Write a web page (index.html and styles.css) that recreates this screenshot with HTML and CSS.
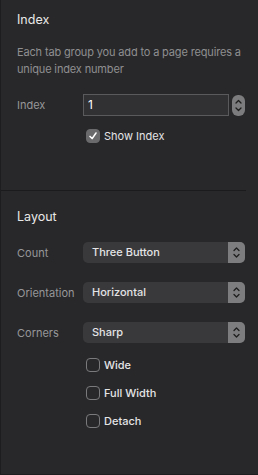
FILE: index.html
```html
<!DOCTYPE html>
<html lang="en">
<head>
  <meta charset="UTF-8">
  <title>Tab Group Inspector</title>
  <link rel="stylesheet" href="styles.css">
</head>
<body>
  <div class="panel">
    <section class="section index-section">
      <h2>Index</h2>
      <p class="hint">Each tab group you add to a page requires a unique index number</p>

      <div class="row first">
        <span class="label">Index</span>
        <div class="field">1</div>
        <div class="stepper">
          <svg width="13" height="21" viewBox="0 0 13 21">
            <path d="M4 8 L6.5 5.5 L9 8" fill="none" stroke="#1e1e1e" stroke-width="1.3" stroke-linecap="round" stroke-linejoin="round"/>
            <path d="M4 13 L6.5 15.5 L9 13" fill="none" stroke="#1e1e1e" stroke-width="1.3" stroke-linecap="round" stroke-linejoin="round"/>
          </svg>
        </div>
      </div>

      <label class="check checked">
        <span class="box">
          <svg width="14" height="14" viewBox="0 0 14 14">
            <path d="M3.5 7.5 L6 10 L10.5 3.5" fill="none" stroke="#fff" stroke-width="1.8" stroke-linecap="round" stroke-linejoin="round"/>
          </svg>
        </span>
        Show Index
      </label>
    </section>

    <div class="divider"></div>

    <section class="section layout-section">
      <h2>Layout</h2>

      <div class="row first">
        <span class="label">Count</span>
        <div class="select">
          <span class="value">Three Button</span>
          <span class="arrows">
            <svg width="17" height="21" viewBox="0 0 17 21">
              <path d="M6 8.5 L8.5 6 L11 8.5" fill="none" stroke="#1e1e1e" stroke-width="1.3" stroke-linecap="round" stroke-linejoin="round"/>
              <path d="M6 12.5 L8.5 15 L11 12.5" fill="none" stroke="#1e1e1e" stroke-width="1.3" stroke-linecap="round" stroke-linejoin="round"/>
            </svg>
          </span>
        </div>
      </div>

      <div class="row">
        <span class="label">Orientation</span>
        <div class="select">
          <span class="value">Horizontal</span>
          <span class="arrows">
            <svg width="17" height="21" viewBox="0 0 17 21">
              <path d="M6 8.5 L8.5 6 L11 8.5" fill="none" stroke="#1e1e1e" stroke-width="1.3" stroke-linecap="round" stroke-linejoin="round"/>
              <path d="M6 12.5 L8.5 15 L11 12.5" fill="none" stroke="#1e1e1e" stroke-width="1.3" stroke-linecap="round" stroke-linejoin="round"/>
            </svg>
          </span>
        </div>
      </div>

      <div class="row">
        <span class="label">Corners</span>
        <div class="select">
          <span class="value">Sharp</span>
          <span class="arrows">
            <svg width="17" height="21" viewBox="0 0 17 21">
              <path d="M6 8.5 L8.5 6 L11 8.5" fill="none" stroke="#1e1e1e" stroke-width="1.3" stroke-linecap="round" stroke-linejoin="round"/>
              <path d="M6 12.5 L8.5 15 L11 12.5" fill="none" stroke="#1e1e1e" stroke-width="1.3" stroke-linecap="round" stroke-linejoin="round"/>
            </svg>
          </span>
        </div>
      </div>

      <div class="checks">
        <label class="check"><span class="box"></span>Wide</label>
        <label class="check"><span class="box"></span>Full Width</label>
        <label class="check"><span class="box"></span>Detach</label>
      </div>
    </section>
  </div>
</body>
</html>
```

FILE: styles.css
```css
/* Inspector panel */
* {
  margin: 0;
  padding: 0;
  box-sizing: border-box;
}

body {
  background: #28282a;
  font-family: 'Inter', 'Noto Sans', sans-serif;
  font-size: 11px;
  color: #e6e6e6;
}

.panel {
  width: 258px;
  height: 475px;
  background: #28282a;
  border-left: 1px solid #1d1d1f;
  border-bottom: 1px solid #1d1d1f;
}

.section {
  padding: 0 10px 0 16px;
}

.index-section {
  padding-top: 12px;
  height: 190px;
}

.layout-section {
  padding-top: 18px;
}

h2 {
  font-size: 12.5px;
  font-weight: 400;
  line-height: 16px;
  color: #e8e8e8;
}

.hint {
  margin-top: 16px;
  font-size: 11px;
  line-height: 17px;
  color: #8f8f91;
  letter-spacing: -0.15px;
}

.row {
  display: flex;
  align-items: center;
  margin-top: 19px;
}

.row.first {
  margin-top: 16px;
}

.layout-section .row.first {
  margin-top: 17px;
}

.label {
  width: 66px;
  color: #979799;
  font-size: 11px;
}

.field {
  width: 146px;
  height: 22px;
  border: 1px solid #5a5a5c;
  background: #313133;
  color: #ffffff;
  font-size: 12px;
  line-height: 20px;
  padding-left: 4px;
}

.stepper {
  margin-left: 3px;
  width: 13px;
  height: 21px;
  border-radius: 6px;
  background: #7c7c7e;
  display: flex;
}

.select {
  display: flex;
  width: 162px;
  height: 21px;
  border-radius: 5px;
  background: #39393b;
  overflow: hidden;
}

.select .value {
  flex: 1;
  padding-left: 9px;
  line-height: 21px;
  font-size: 11px;
  font-weight: 500;
  color: #e4e4e6;
}

.select .arrows {
  width: 17px;
  background: #7d7d7f;
  display: flex;
}

.check {
  display: flex;
  align-items: center;
  gap: 4px;
  margin-left: 69px;
  font-size: 11px;
  font-weight: 500;
  color: #e4e4e6;
  line-height: 14px;
}

.index-section .check {
  margin-top: 13px;
  font-weight: 400;
}

.box {
  width: 14px;
  height: 14px;
  border: 1px solid #7a7a7c;
  border-radius: 4px;
  display: flex;
  align-items: center;
  justify-content: center;
}

.check.checked .box {
  background: #6a6a6c;
  border-color: #6a6a6c;
}

.checks {
  margin-top: 15px;
  display: flex;
  flex-direction: column;
  gap: 14px;
}

.divider {
  width: 245px;
  height: 1px;
  background: #1b1b1d;
}
```
